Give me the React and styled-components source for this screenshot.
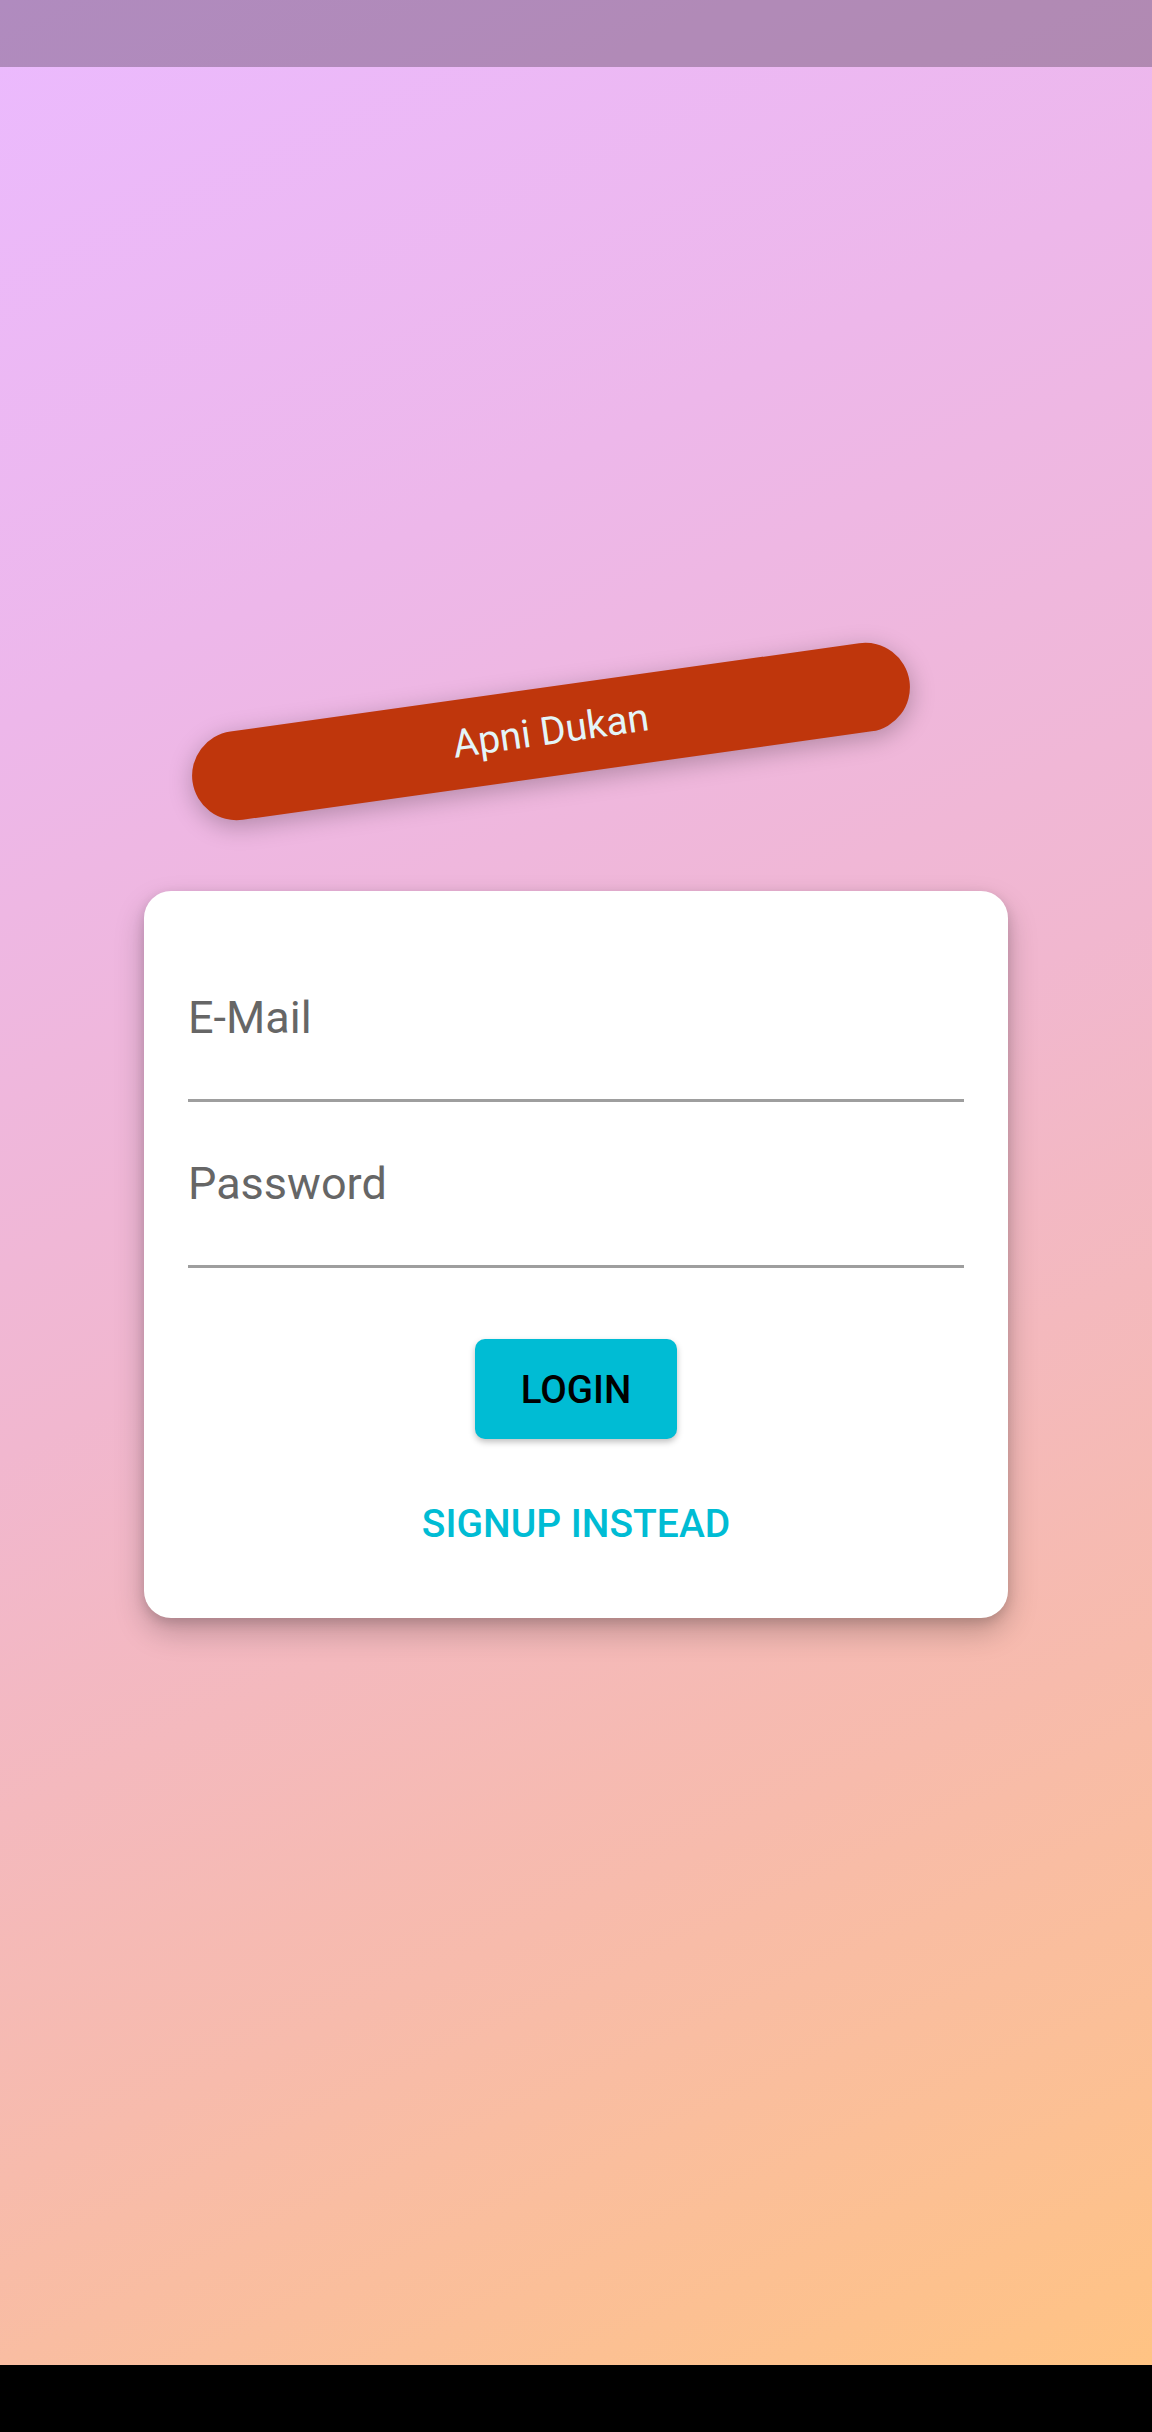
import React from 'react'
import styled, { createGlobalStyle } from 'styled-components'

const GlobalStyle = createGlobalStyle`
  html, body {
    margin: 0;
    padding: 0;
    background: #000;
  }
  body {
    font-family: Roboto, "Noto Sans", sans-serif;
  }
  * {
    box-sizing: border-box;
  }
`;

const Screen = styled.div`
  width: 1152px;
  height: 2432px;
  display: flex;
  flex-direction: column;
`;

const Surface = styled.div`
  flex: 1;
  display: flex;
  flex-direction: column;
  background: linear-gradient(
    154.65deg,
    rgb(235, 186, 255) 0%,
    rgb(237, 183, 234) 25%,
    rgb(241, 183, 207) 50%,
    rgb(247, 187, 172) 75%,
    rgb(255, 195, 131) 100%
  );
`;

const StatusBar = styled.div`
  height: 67px;
  background: rgba(0, 0, 0, 0.25);
`;

const NavBar = styled.div`
  height: 67px;
  background: #000;
`;

const Body = styled.main`
  flex: 1;
  display: flex;
  flex-direction: column;
  align-items: center;
  padding-top: 620px;
`;

const Banner = styled.div`
  padding: 22px 263px;
  border-radius: 55px;
  background: #bf360c;
  color: #e4f5f8;
  font-size: 39px;
  line-height: 45px;
  white-space: nowrap;
  box-shadow: 0 6px 24px rgba(0, 0, 0, 0.26);
  transform: translateX(-25px) rotate(-8deg);
`;

const Card = styled.form`
  margin-top: 115px;
  width: 864px;
  padding: 45px 44px 44px;
  background: #fff;
  border-radius: 27px;
  box-shadow: 0 14px 30px rgba(0, 0, 0, 0.22), 0 4px 12px rgba(0, 0, 0, 0.14);
  display: flex;
  flex-direction: column;
  align-items: center;
`;

const Field = styled.label`
  display: block;
  width: 100%;
  padding-top: 56px;
  border-bottom: 3px solid #9e9e9e;
`;

const FieldLabel = styled.span`
  display: block;
  font-size: 45px;
  line-height: 52px;
  color: #666;
`;

const FieldInput = styled.input`
  display: block;
  width: 100%;
  height: 55px;
  border: none;
  outline: none;
  background: transparent;
  font-family: inherit;
  font-size: 44px;
  padding: 0;
`;

const LoginButton = styled.button`
  margin-top: 71px;
  width: 202px;
  height: 100px;
  border: none;
  border-radius: 10px;
  background: #00bcd4;
  color: #000;
  font-family: Roboto, sans-serif;
  font-weight: 500;
  font-size: 38.5px;
  box-shadow: 0 3px 6px rgba(0, 0, 0, 0.25);
  cursor: pointer;
`;

const SignupButton = styled.button`
  margin-top: 36px;
  padding: 27px 16px;
  border: none;
  background: transparent;
  color: #00bcd4;
  font-family: Roboto, sans-serif;
  font-weight: 500;
  font-size: 39px;
  line-height: 45px;
  cursor: pointer;
`;

function App() {
  return (
    <>
      <GlobalStyle />
      <Screen>
        <Surface>
          <StatusBar />
          <Body>
            <Banner>Apni Dukan</Banner>
            <Card onSubmit={e => e.preventDefault()}>
              <Field>
                <FieldLabel>E-Mail</FieldLabel>
                <FieldInput type="email" name="email" />
              </Field>
              <Field>
                <FieldLabel>Password</FieldLabel>
                <FieldInput type="password" name="password" />
              </Field>
              <LoginButton type="submit">LOGIN</LoginButton>
              <SignupButton type="button">SIGNUP INSTEAD</SignupButton>
            </Card>
          </Body>
        </Surface>
        <NavBar />
      </Screen>
    </>
  )
}

export default App
